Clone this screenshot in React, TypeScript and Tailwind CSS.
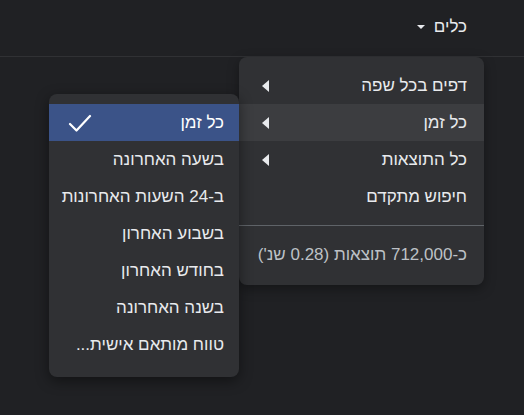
import { Fragment } from 'react'

const font = { fontFamily: '"Liberation Sans", Arial, "DejaVu Sans", sans-serif' }

const mainItems = [
  { label: 'דפים בכל שפה', sub: true },
  { label: 'כל זמן', sub: true, active: true },
  { label: 'כל התוצאות', sub: true },
  { label: 'חיפוש מתקדם', sub: false },
]

const timeItems = [
  'כל זמן',
  'בשעה האחרונה',
  'ב-24 השעות האחרונות',
  'בשבוע האחרון',
  'בחודש האחרון',
  'בשנה האחרונה',
  'טווח מותאם אישית...',
]

function LeftArrow() {
  return (
    <svg width="7" height="12" viewBox="0 0 7 12" aria-hidden>
      <path d="M7 0v12L0 6z" fill="#e8eaed" />
    </svg>
  )
}

function Check() {
  return (
    <svg width="24" height="18" viewBox="0 0 24 18" fill="none" aria-hidden>
      <path d="M2 10l6.5 6.5L22 2" stroke="#ffffff" strokeWidth="2.2" strokeLinecap="round" strokeLinejoin="round" />
    </svg>
  )
}

export default function App() {
  return (
    <div dir="rtl" className="relative h-[415px] w-[524px] overflow-hidden bg-[#202124] text-[#e8eaed]" style={font}>
      <header className="flex h-[57px] items-center border-b border-[#303134] pr-[57px] pb-[3px]">
        <button className="flex items-center gap-[9px] text-[17px] text-[#e8eaed]">
          כלים
          <svg width="8" height="4" viewBox="0 0 8 4" aria-hidden>
            <path d="M0 0h8L4 4z" fill="#e8eaed" />
          </svg>
        </button>
      </header>

      {/* tools menu */}
      <div className="absolute left-[239px] top-[57px] flex h-[228px] w-[245px] flex-col rounded-lg bg-[#303134] pt-[10px] shadow-[0_4px_12px_rgba(0,0,0,0.35)]">
        {mainItems.map((it) => (
          <div
            key={it.label}
            className={`flex h-[37px] items-center justify-between whitespace-nowrap pl-[23px] pr-[17px] text-[17px] ${it.active ? 'bg-[#3c3d40]' : ''}`}
          >
            <span>{it.label}</span>
            {it.sub && <LeftArrow />}
          </div>
        ))}
        <div className="mt-[10px] h-px bg-[#5f6368]" />
        <div className="flex flex-1 items-center whitespace-nowrap pr-[17px] pb-[2px] text-[17px] text-[#bdc1c6]">
          כ-712,000 תוצאות (0.28 שנ')
        </div>
      </div>

      {/* time submenu */}
      <div className="absolute left-[49px] top-[94px] flex h-[283px] w-[190px] flex-col rounded-lg bg-[#303134] pt-[10px] shadow-[0_4px_14px_rgba(0,0,0,0.45)]">
        {timeItems.map((label, i) => (
          <Fragment key={label}>
            <div
              className={`flex h-[37px] items-center justify-between whitespace-nowrap pl-[19px] pr-[15px] text-[17px] ${i === 0 ? 'bg-[#3b5388] text-white' : ''}`}
            >
              <span>{label}</span>
              {i === 0 && <Check />}
            </div>
          </Fragment>
        ))}
      </div>
    </div>
  )
}
